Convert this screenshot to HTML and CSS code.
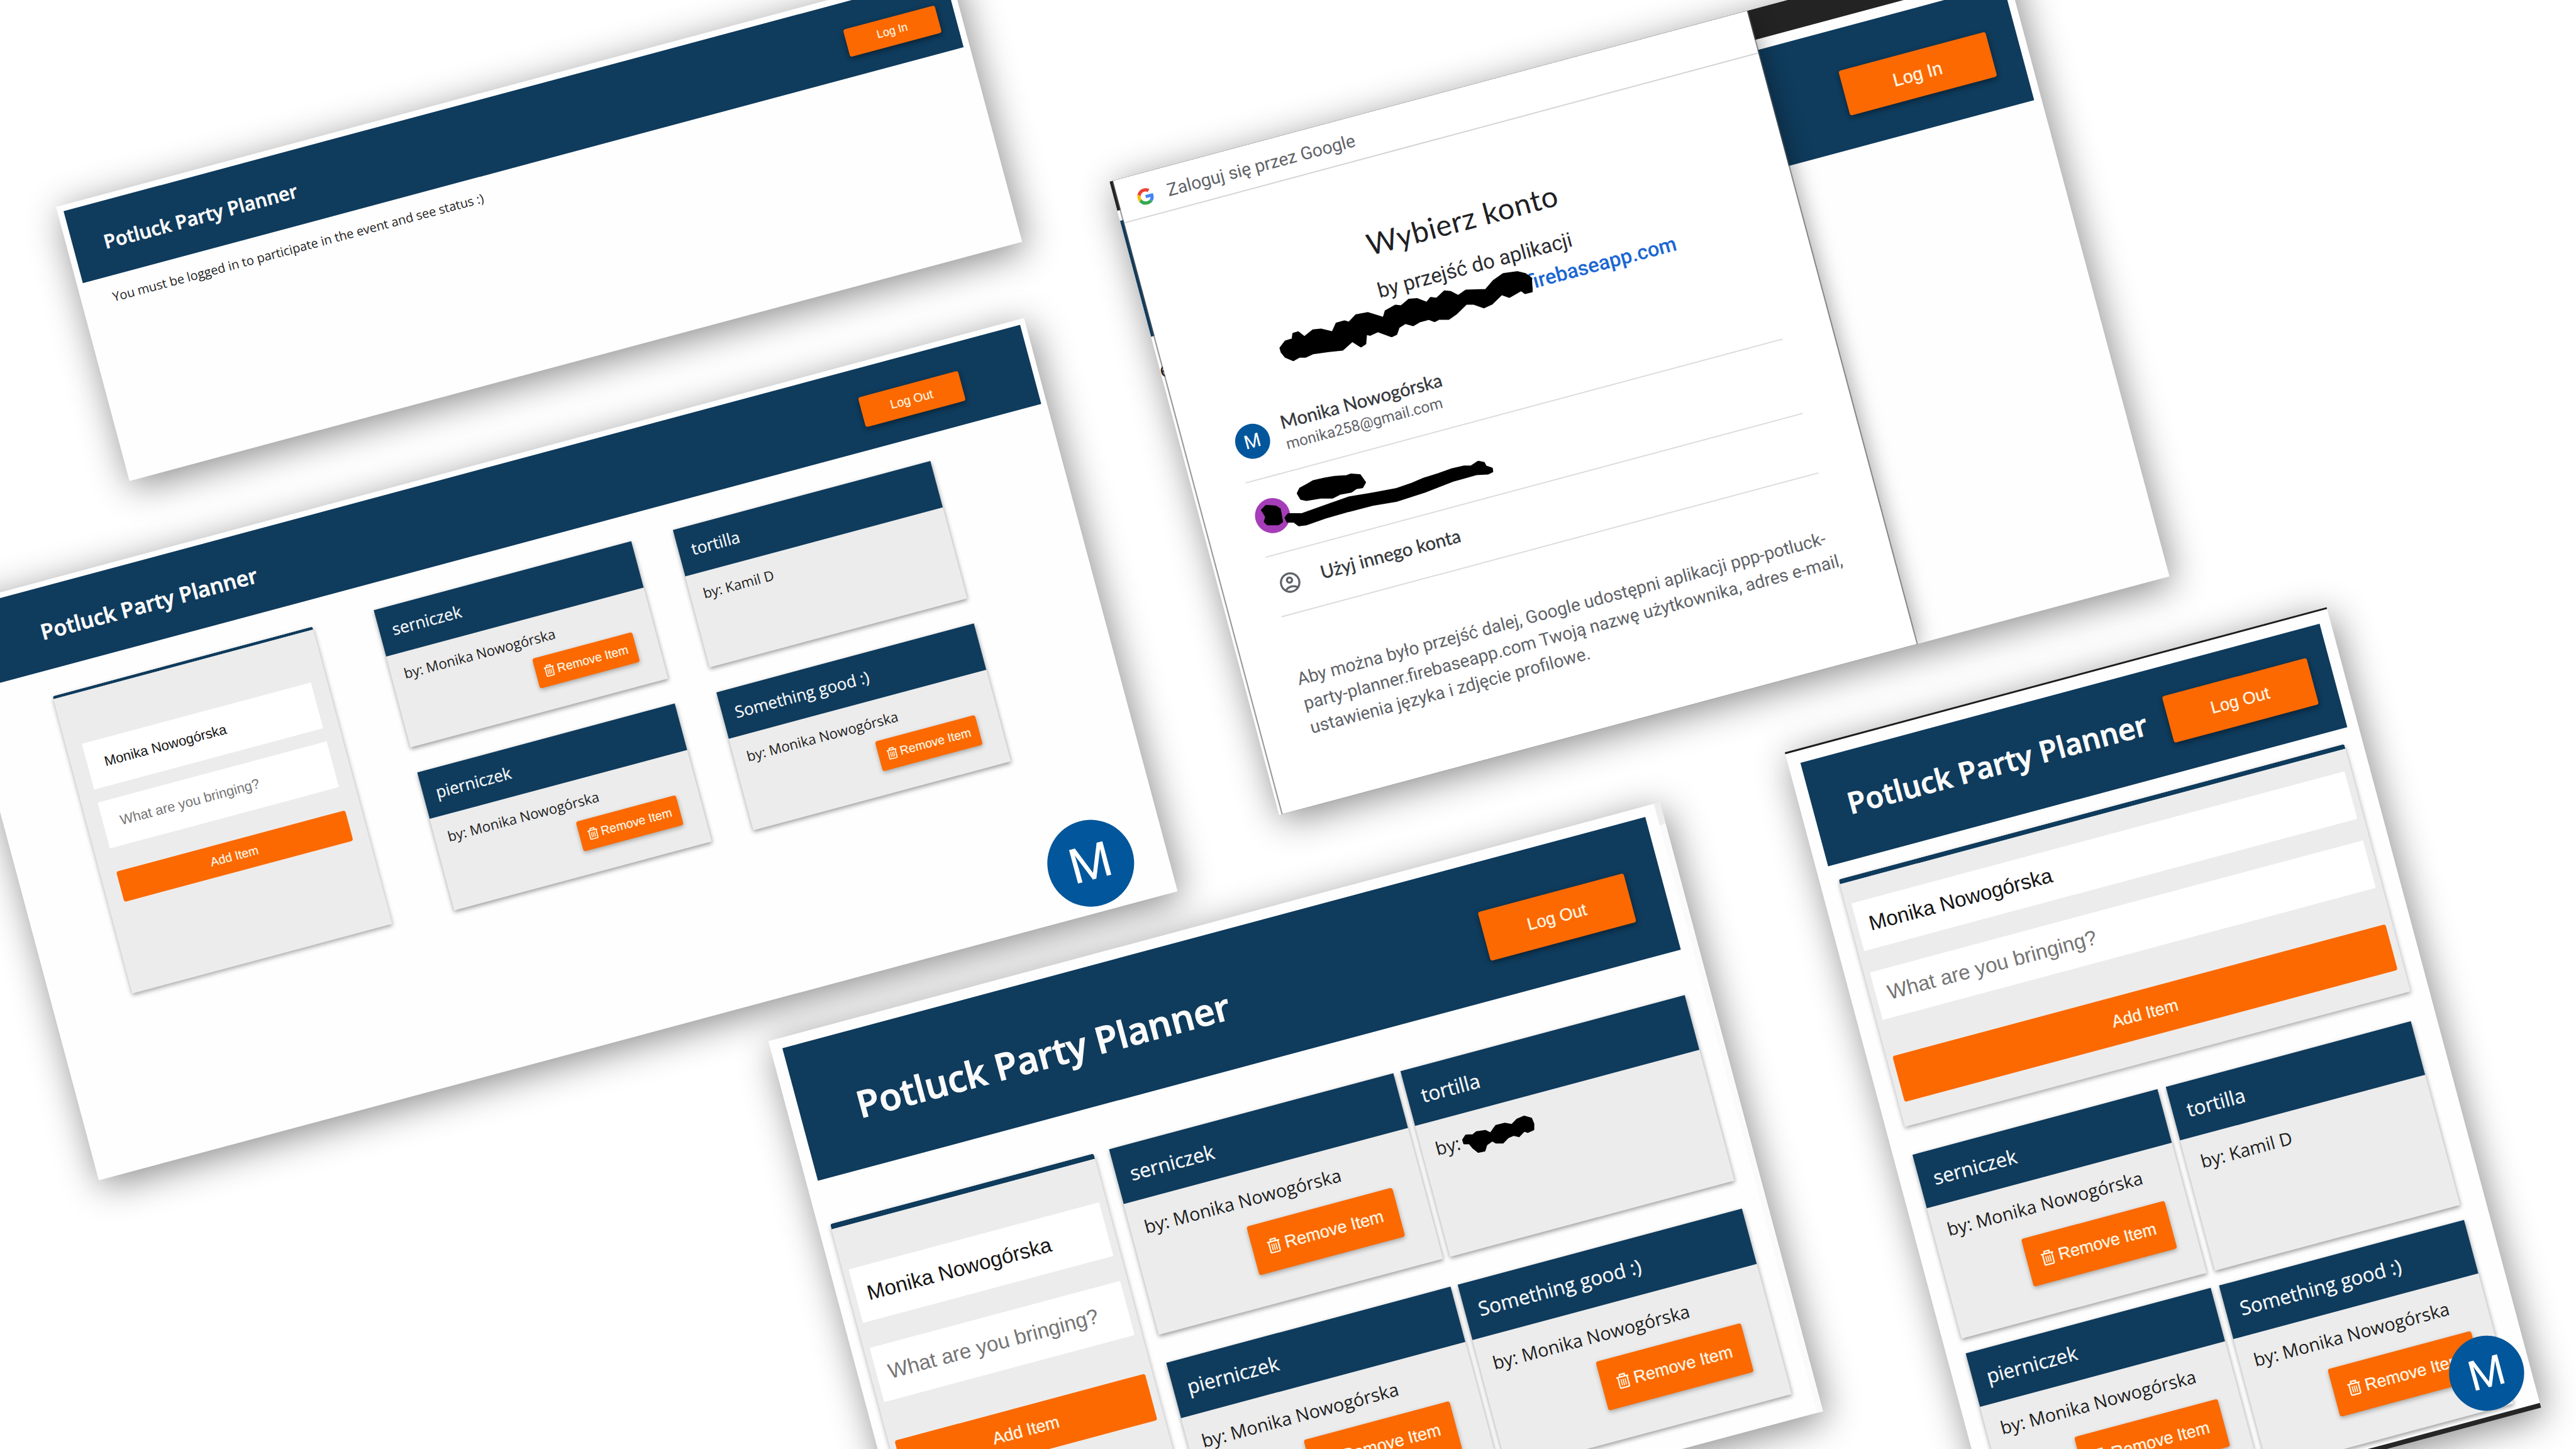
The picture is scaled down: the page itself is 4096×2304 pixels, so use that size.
FILE: index.html
```html
<!DOCTYPE html>
<html lang="pl">
<head>
<meta charset="utf-8">
<title>Potluck Party Planner</title>
<link rel="stylesheet" href="styles.css">
</head>
<body>
<svg class="defs" width="0" height="0" aria-hidden="true">
  <symbol id="trash" viewBox="0 0 18 21">
    <g fill="none" stroke="currentColor" stroke-width="2">
      <path d="M5.6 4.6V1.4h6.8v3.2"/>
      <path d="M.3 4.8h17.4"/>
      <path d="M2.6 5.2v13.2a1.5 1.5 0 0 0 1.5 1.5h9.8a1.5 1.5 0 0 0 1.5-1.5V5.2"/>
      <path d="M6.2 8v9M9 8v9M11.8 8v9" stroke-width="1.5"/>
    </g>
  </symbol>
</svg>
<main class="stage">

  <section class="window window-welcome">
    <header class="bar">
      <h1 class="title">Potluck Party Planner</h1>
      <button class="btn">Log In</button>
    </header>
    <p class="message">You must be logged in to participate in the event and see status :)</p>
  </section>

  <section class="window window-desktop">
    <header class="bar">
      <h1 class="title">Potluck Party Planner</h1>
      <button class="btn">Log Out</button>
    </header>
    <div class="content">
      <form class="form">
        <div class="field">Monika Nowogórska</div>
        <div class="field placeholder">What are you bringing?</div>
        <button type="button" class="btn btn-add">Add Item</button>
      </form>
      <div class="items">
        <article class="item"><h3 class="item-name">serniczek</h3><p class="item-by">by: Monika Nowogórska</p><button class="btn btn-remove"><svg class="trash"><use href="#trash"/></svg>Remove Item</button></article>
        <article class="item"><h3 class="item-name">tortilla</h3><p class="item-by">by: Kamil D</p></article>
        <article class="item"><h3 class="item-name">pierniczek</h3><p class="item-by">by: Monika Nowogórska</p><button class="btn btn-remove"><svg class="trash"><use href="#trash"/></svg>Remove Item</button></article>
        <article class="item"><h3 class="item-name">Something good :)</h3><p class="item-by">by: Monika Nowogórska</p><button class="btn btn-remove"><svg class="trash"><use href="#trash"/></svg>Remove Item</button></article>
      </div>
    </div>
    <div class="user-badge">M</div>
  </section>

  <section class="window window-google">
    <div class="backdrop">
      <div class="tabstrip"></div>
      <header class="bar">
        <button class="btn">Log In</button>
      </header>
      <p class="cut-text">e</p>
    </div>
    <div class="popup">
      <div class="popup-head">
        <svg class="google-logo" viewBox="0 0 48 48">
          <path fill="#ea4335" d="M24 9.5c3.54 0 6.71 1.22 9.21 3.6l6.85-6.85C35.9 2.38 30.47 0 24 0 14.62 0 6.51 5.38 2.56 13.22l7.98 6.19C12.43 13.72 17.74 9.5 24 9.5z"/>
          <path fill="#4285f4" d="M46.98 24.55c0-1.57-.15-3.09-.38-4.55H24v9.02h12.94c-.58 2.96-2.26 5.48-4.78 7.18l7.73 6c4.51-4.18 7.09-10.36 7.09-17.65z"/>
          <path fill="#fbbc05" d="M10.53 28.59c-.48-1.45-.76-2.99-.76-4.59s.27-3.14.76-4.59l-7.98-6.19C.92 16.46 0 20.12 0 24c0 3.88.92 7.54 2.56 10.78l7.97-6.19z"/>
          <path fill="#34a853" d="M24 48c6.48 0 11.93-2.13 15.89-5.81l-7.73-6c-2.15 1.45-4.92 2.3-8.16 2.3-6.26 0-11.57-4.22-13.47-9.91l-7.98 6.19C6.51 42.62 14.62 48 24 48z"/>
        </svg>
        <span>Zaloguj się przez Google</span>
      </div>
      <h2 class="popup-title">Wybierz konto</h2>
      <p class="popup-sub">by przejść do aplikacji</p>
      <p class="popup-url"><span class="redacted"></span><span>firebaseapp.com</span></p>
      <ul class="accounts">
        <li class="account">
          <span class="avatar">M</span>
          <span class="who"><span class="who-name">Monika Nowogórska</span><span class="who-mail">monika258@gmail.com</span></span>
        </li>
        <li class="account"><span class="avatar avatar-purple"></span></li>
        <li class="account account-other">
          <span class="person"><svg viewBox="0 0 24 24" width="40" height="40"><path fill="#5f6368" d="M12 2C6.48 2 2 6.48 2 12s4.48 10 10 10 10-4.48 10-10S17.520 2 12 2zM7.350 18.500C8.660 17.560 10.260 17 12 17s3.340.56 4.650 1.500C15.340 19.440 13.740 20 12 20s-3.340-.56-4.650-1.500zm10.790-1.380C16.450 15.800 14.320 15 12 15s-4.450.8-6.140 2.120C4.700 15.730 4 13.950 4 12c0-4.420 3.580-8 8-8s8 3.580 8 8c0 1.950-.7 3.730-1.860 5.120zM12 6c-1.930 0-3.500 1.570-3.500 3.500S10.070 13 12 13s3.500-1.570 3.500-3.500S13.930 6 12 6zm0 5c-.83 0-1.500-.67-1.500-1.500S11.170 8 12 8s1.500.67 1.500 1.500S12.830 11 12 11z"/></svg></span>
          <span class="who-name">Użyj innego konta</span>
        </li>
      </ul>
      <p class="disclosure">Aby można było przejść dalej, Google udostępni aplikacji ppp-potluck-<br>party-planner.firebaseapp.com Twoją nazwę użytkownika, adres e-mail,<br>ustawienia języka i zdjęcie profilowe.</p>
    </div>
    <svg class="marker" width="1497" height="1065">
      <g transform="rotate(15) translate(-52 -294.5) scale(.63776 .44643)">
        <path d="M517 1265L530 1240 548 1232 550 1212 562 1207 578 1225 600 1200 620 1197 650 1207 660 1175 680 1167 692 1172 710 1145 740 1137 780 1155 785 1130 810 1110 825 1112 845 1088 865 1086 890 1100 900 1082 915 1085 935 1058 950 1060 970 1075 990 1055 1040 1053 1060 1020 1085 995 1120 988 1140 995 1155 1010 1157 1060 1140 1066 1130 1055 1100 1080 1080 1070 1055 1105 1035 1118 1010 1105 990 1105 965 1140 945 1160 920 1160 910 1168 895 1160 870 1170 855 1183 835 1175 818 1190 812 1215 800 1223 765 1205 745 1218 735 1215 733 1250 722 1260 700 1240 675 1272 640 1277 600 1285 580 1298 565 1298 550 1310 530 1298 520 1280z"/>
      </g>
      <g transform="rotate(15) translate(98 205.5) scale(.76531 .54209)">
        <path d="M272 555L277 540 290 530 305 518 330 510 350 505 375 503 385 498 403 500 408 510 414 522 408 537 395 540 385 550 360 557 345 568 320 568 290 575 279 572z"/>
        <path d="M246 628L252 617 280 617 340 587 380 567 430 555 480 542 515 525 540 510 570 497 600 482 625 474 640 474 655 460 666 463 670 474 683 480 684 490 675 496 650 498 600 518 540 551 480 578 430 590 380 608 330 628 290 648 274 651 264 640 250 640z"/>
        <path d="M196 605L205 592 225 594 233 602 238 640 230 648 208 648 202 640 205 625z"/>
      </g>
    </svg>
  </section>

  <section class="window window-tablet">
    <div class="scrollbar"><div class="scroll-arrow"></div></div>
    <header class="bar">
      <h1 class="title">Potluck Party Planner</h1>
      <button class="btn">Log Out</button>
    </header>
    <div class="content">
      <form class="form">
        <div class="field">Monika Nowogórska</div>
        <div class="field placeholder">What are you bringing?</div>
        <button type="button" class="btn btn-add">Add Item</button>
      </form>
      <div class="items">
        <article class="item"><h3 class="item-name">serniczek</h3><p class="item-by">by: Monika Nowogórska</p><button class="btn btn-remove"><svg class="trash"><use href="#trash"/></svg>Remove Item</button></article>
        <article class="item"><h3 class="item-name">tortilla</h3><p class="item-by">by:</p></article>
        <article class="item"><h3 class="item-name">pierniczek</h3><p class="item-by">by: Monika Nowogórska</p><button class="btn btn-remove"><svg class="trash"><use href="#trash"/></svg>Remove Item</button></article>
        <article class="item"><h3 class="item-name">Something good :)</h3><p class="item-by">by: Monika Nowogórska</p><button class="btn btn-remove"><svg class="trash"><use href="#trash"/></svg>Remove Item</button></article>
      </div>
    </div>
    <svg class="marker" width="1500" height="1024">
      <g transform="rotate(15) translate(851.7 -411.500) scale(.57398 .68495)">
        <path d="M482 835L490 825 510 824 520 817 545 814 560 820 575 802 600 797 620 800 635 787 655 780 675 785 681 797 681 810 665 816 655 813 640 826 625 823 610 828 595 841 575 841 565 836 548 846 543 860 525 863 510 853 500 843 485 843z"/>
      </g>
    </svg>
  </section>

  <section class="window window-phone">
    <header class="bar">
      <h1 class="title">Potluck Party Planner</h1>
      <button class="btn">Log Out</button>
    </header>
    <div class="content">
      <form class="form">
        <div class="field">Monika Nowogórska</div>
        <div class="field placeholder">What are you bringing?</div>
        <button type="button" class="btn btn-add">Add Item</button>
      </form>
      <div class="items">
        <article class="item"><h3 class="item-name">serniczek</h3><p class="item-by">by: Monika Nowogórska</p><button class="btn btn-remove"><svg class="trash"><use href="#trash"/></svg>Remove Item</button></article>
        <article class="item"><h3 class="item-name">tortilla</h3><p class="item-by">by: Kamil D</p></article>
        <article class="item"><h3 class="item-name">pierniczek</h3><p class="item-by">by: Monika Nowogórska</p><button class="btn btn-remove"><svg class="trash"><use href="#trash"/></svg>Remove Item</button></article>
        <article class="item"><h3 class="item-name">Something good :)</h3><p class="item-by">by: Monika Nowogórska</p><button class="btn btn-remove"><svg class="trash"><use href="#trash"/></svg>Remove Item</button></article>
      </div>
    </div>
    <div class="user-badge">M</div>
  </section>

</main>
</body>
</html>
```
FILE: styles.css
```css
* { box-sizing: border-box; }
html, body { margin: 0; width: 4096px; height: 2304px; overflow: hidden; background: #fff; }
h1, h2, h3, p, ul { margin: 0; padding: 0; font-weight: 400; }
ul { list-style: none; }
.defs { position: absolute; }

.stage {
  position: relative;
  width: 4184px;
  height: 2354px;
  overflow: hidden;
  background: #fff;
  transform: scale(.978967);
  transform-origin: 0 0;
  font-family: "Open Sans", "Noto Sans", sans-serif;
  line-height: 1;
  white-space: nowrap;
}

/* windows scattered over the canvas, all tilted the same way */
.window {
  position: absolute;
  transform: rotate(-15deg);
  transform-origin: 0 0;
  background: #fefefe;
  box-shadow: 4px 12px 60px rgba(0, 0, 0, .46);
}

/* shared app parts */
.bar {
  display: flex;
  align-items: center;
  justify-content: space-between;
  height: var(--bar-h);
  padding: var(--bar-pt) var(--bar-pr) 0 var(--bar-pl);
  background: #0f3b5c;
}
.title {
  color: #fafafa;
  font-weight: 600;
  font-size: var(--title);
  line-height: 1;
  -webkit-text-stroke: .022em #fafafa;
}
.btn {
  display: flex;
  align-items: center;
  justify-content: center;
  flex: none;
  width: var(--btn-w);
  height: var(--btn-h);
  padding: 0;
  border: 0;
  border-radius: 4px;
  background: #fb6900;
  color: #fff5e4;
  font: 400 var(--btn-fs)/1 "Liberation Sans", Arial, sans-serif;
  white-space: nowrap;
  -webkit-text-stroke: .014em #fff5e4;
  box-shadow: 0 3px 9px rgba(0, 0, 0, .45);
}
.content { display: flex; }
.form {
  flex: none;
  display: flex;
  flex-direction: column;
  gap: var(--field-gap);
  background: #ececec;
  border-top: solid #0f3b5c;
  border-radius: 4px 4px 0 0;
  box-shadow: 0 3px 8px rgba(0, 0, 0, .35);
}
.field {
  flex: none;
  display: flex;
  align-items: center;
  height: var(--field-h);
  padding-left: var(--field-pl);
  background: #fff;
  color: #151515;
  font: 400 var(--field-fs)/1 "Liberation Sans", Arial, sans-serif;
}
.placeholder { color: #757575; }
.btn-add { width: auto; height: var(--add-h); margin-top: var(--add-mt); box-shadow: none; }
.items { flex: none; display: grid; }
.item {
  display: flex;
  flex-direction: column;
  background: #ececec;
  box-shadow: 0 3px 8px rgba(0, 0, 0, .4);
}
.item-name {
  display: flex;
  align-items: center;
  flex: none;
  height: var(--name-h);
  padding-left: var(--item-pl);
  background: #0f3b5c;
  color: #f6f8fa;
  font-size: var(--name-fs);
  -webkit-text-stroke: .01em #f6f8fa;
}
.item-by { padding: var(--by-pt) 0 0 var(--item-pl); color: #1d1d1d; font-size: var(--by-fs); }
.btn-remove {
  align-self: flex-end;
  margin: var(--rm-mt) var(--rm-mr) 0 0;
  gap: var(--icon-gap);
  box-shadow: 0 3px 8px rgba(0, 0, 0, .3);
}
.trash { width: var(--icon-w); height: calc(var(--icon-w) * 1.2); }
.user-badge {
  position: absolute;
  display: flex;
  align-items: center;
  justify-content: center;
  border-radius: 50%;
  background: #02569b;
  color: #fff;
  font-family: Roboto, sans-serif;
}
.marker { position: absolute; left: 0; top: 0; overflow: visible; }
.marker path { fill: #000; stroke: #000; stroke-width: 5; stroke-linejoin: round; }

/* signed-out page */
.window-welcome {
  left: 91.4px; top: 335.7px; width: 1501px; height: 461px; padding: 10px;
  --bar-h: 121px; --bar-pt: 10px; --bar-pl: 50.5px; --bar-pr: 28.5px; --title: 31.1px;
  --btn-w: 153.5px; --btn-h: 46px; --btn-fs: 18.4px;
}
.message { padding: 24px 0 0 41px; font-size: 20.5px; color: #222; }

/* wide layout */
.window-desktop {
  left: -88.8px; top: 986.1px; width: 1814px; height: 964px; padding: 9px 9.5px;
  --bar-h: 133px; --bar-pt: 9px; --bar-pl: 130px; --bar-pr: 117px; --title: 34.8px;
  --btn-w: 168px; --btn-h: 50px; --btn-fs: 20px;
  --field-h: 77.5px; --field-gap: 21.5px; --field-pl: 28.5px; --field-fs: 22.6px;
  --add-h: 50.5px; --add-mt: 17.5px;
  --name-h: 78px; --name-fs: 26.6px; --item-pl: 21px;
  --by-fs: 22.7px; --by-pt: 24.5px; --rm-mt: 18.500px; --rm-mr: 37px;
  --icon-w: 17px; --icon-gap: 5px;
}
.window-desktop .content { padding: 42.5px 0 0 121px; gap: 103.5px; }
.window-desktop .form { width: 437px; height: 500.5px; border-top-width: 5px; padding: 82px 26px 0; }
.window-desktop .items { grid-template: 231.5px 231.5px / 433px 433px; gap: 42px 70px; }
.window-desktop .user-badge { left: 1618.5px; top: 813px; width: 141px; height: 141px; font-size: 79px; }

/* Google account chooser over the app */
.window-google {
  left: 1802px; top: 294.5px; width: 1497px; height: 1065px;
  --bar-h: 195px; --bar-pt: 14px; --bar-pl: 0; --bar-pr: 48.5px;
  --btn-w: 247px; --btn-h: 74.5px; --btn-fs: 29.5px;
}
.backdrop { height: 1065px; padding-right: 12px; overflow: hidden; }
.tabstrip { height: 48.5px; margin: 0 -12px 17.5px 0; background: #232323; }
.window-google .bar { justify-content: flex-end; }
.cut-text { margin-top: 39px; font-size: 34px; margin-left: -1px; color: #222; }
.popup {
  position: absolute;
  left: 6px;
  top: 0;
  width: 1066px;
  height: 1065px;
  background: #fff;
  box-shadow: -1px 0 0 1px rgba(90, 90, 90, .6), 1px 0 0 1px rgba(90, 90, 90, .6), 12px 10px 36px -8px rgba(0, 0, 0, .36);
  clip-path: inset(0 -60px 0 -3px);
  font-family: Roboto, sans-serif;
}
.popup-head {
  display: flex;
  align-items: center;
  gap: 23px;
  height: 72px;
  padding: 6px 0 0 31px;
  border-bottom: 2px solid #d4d4d6;
  font-size: 28.9px;
  color: #5f6368;
}
.google-logo { width: 27px; height: 27px; }
.popup-title {
  margin: 111.5px 3px 0 0;
  text-align: center;
  font: 400 48px/1 Lato, sans-serif;
  letter-spacing: .75px;
  color: #202124;
}
.popup-sub { margin: 36.5px 2px 0 0; text-align: center; font-size: 33.4px; color: #2b2c2f; }
.popup-url { display: flex; margin-top: 17px; padding-left: 206px; font-size: 33.4px; font-weight: 500; color: #1a67d2; }
.redacted { width: 400px; }
.accounts { margin: 54.5px 0 0 80.5px; width: 903.5px; }
.account {
  display: flex;
  align-items: center;
  gap: 23.5px;
  height: 125px;
  border-bottom: 2px solid #dcdcde;
}
.account-other { height: 100px; }
.avatar {
  display: flex;
  align-items: center;
  justify-content: center;
  width: 57px;
  height: 57px;
  border-radius: 50%;
  background: #02569b;
  color: #fff;
  font-size: 31px;
}
.avatar-purple { background: #a63db8; }
.who { display: flex; flex-direction: column; gap: 10px; }
.who-name { font: 400 29.9px/1 Lato, sans-serif; color: #35383c; -webkit-text-stroke: .4px #35383c; }
.account-other .who-name { margin-bottom: 6px; }
.who-mail { font-size: 24.8px; color: #5f6368; }
.person { display: flex; justify-content: center; width: 57px; }
.disclosure { margin: 84px 0 0 79.5px; font-size: 28.8px; line-height: 40.5px; color: #5f6368; }

/* medium layout */
.window-tablet {
  left: 1248.3px; top: 1691px; width: 1499px; height: 1024px; padding: 16.5px 29.5px 0 19px;
  --bar-h: 223.5px; --bar-pt: 18px; --bar-pl: 93px; --bar-pr: 58px; --title: 60px;
  --btn-w: 244.5px; --btn-h: 82px; --btn-fs: 27.8px;
  --field-h: 90.5px; --field-gap: 42px; --field-pl: 19.5px; --field-fs: 34.1px;
  --add-h: 78px; --add-mt: 23.5px;
  --name-h: 92.5px; --name-fs: 32.3px; --item-pl: 23px;
  --by-fs: 29.5px; --by-pt: 30px; --rm-mt: 27px; --rm-mr: 50px;
  --icon-w: 21.5px; --icon-gap: 7px;
}
.window-tablet .content { padding: 72.5px 0 0 .5px; gap: 26px; height: 784px; }
.window-tablet .form { width: 443.5px; height: 680px; border-top-width: 9px; padding: 70px 12px 0 10.5px; }
.window-tablet .items { grid-template: 312px 312px / 477.5px 478.5px; gap: 47.5px 12px; align-content: start; }
.scrollbar { position: absolute; right: 0; top: 0; width: 10px; height: 1024px; background: #fafafa; }
.scroll-arrow { height: 36px; background: #ededed; }

/* narrow layout */
.window-phone {
  left: 2899px; top: 1221.7px; width: 910.5px; height: 1346px; padding: 20px 17.5px 0 20px;
  border-top: 3px solid #1c1c1c;
  border-bottom: 8px solid #262626;
  --bar-h: 174px; --bar-pt: 0; --bar-pl: 57px; --bar-pr: 35.5px; --title: 48.2px;
  --btn-w: 243px; --btn-h: 77.5px; --btn-fs: 27.6px;
  --field-h: 80px; --field-gap: 36.5px; --field-pl: 20px; --field-fs: 33.9px;
  --add-h: 77px; --add-mt: 24.5px;
  --name-h: 90px; --name-fs: 32px; --item-pl: 23.5px;
  --by-fs: 29.3px; --by-pt: 28px; --rm-mt: 30.5px; --rm-mr: 36px;
  --icon-w: 21.5px; --icon-gap: 7px;
}
.window-phone .btn-remove { --btn-w: 241px; --btn-h: 80px; }
.window-phone .title { margin-bottom: 8px; }
.window-phone .content { flex-direction: column; padding: 25px 0 0 11px; gap: 47.5px; }
.window-phone .form { width: 850px; height: 415.5px; border-top-width: 8px; padding: 34.5px 11px 0 9.5px; }
.window-phone .items { grid-template: 309px 309px / 411.5px 411.5px; gap: 24.5px 14.5px; }
.window-phone .user-badge { left: 779px; top: 1205px; width: 122px; height: 122px; font-size: 68px; }
```
